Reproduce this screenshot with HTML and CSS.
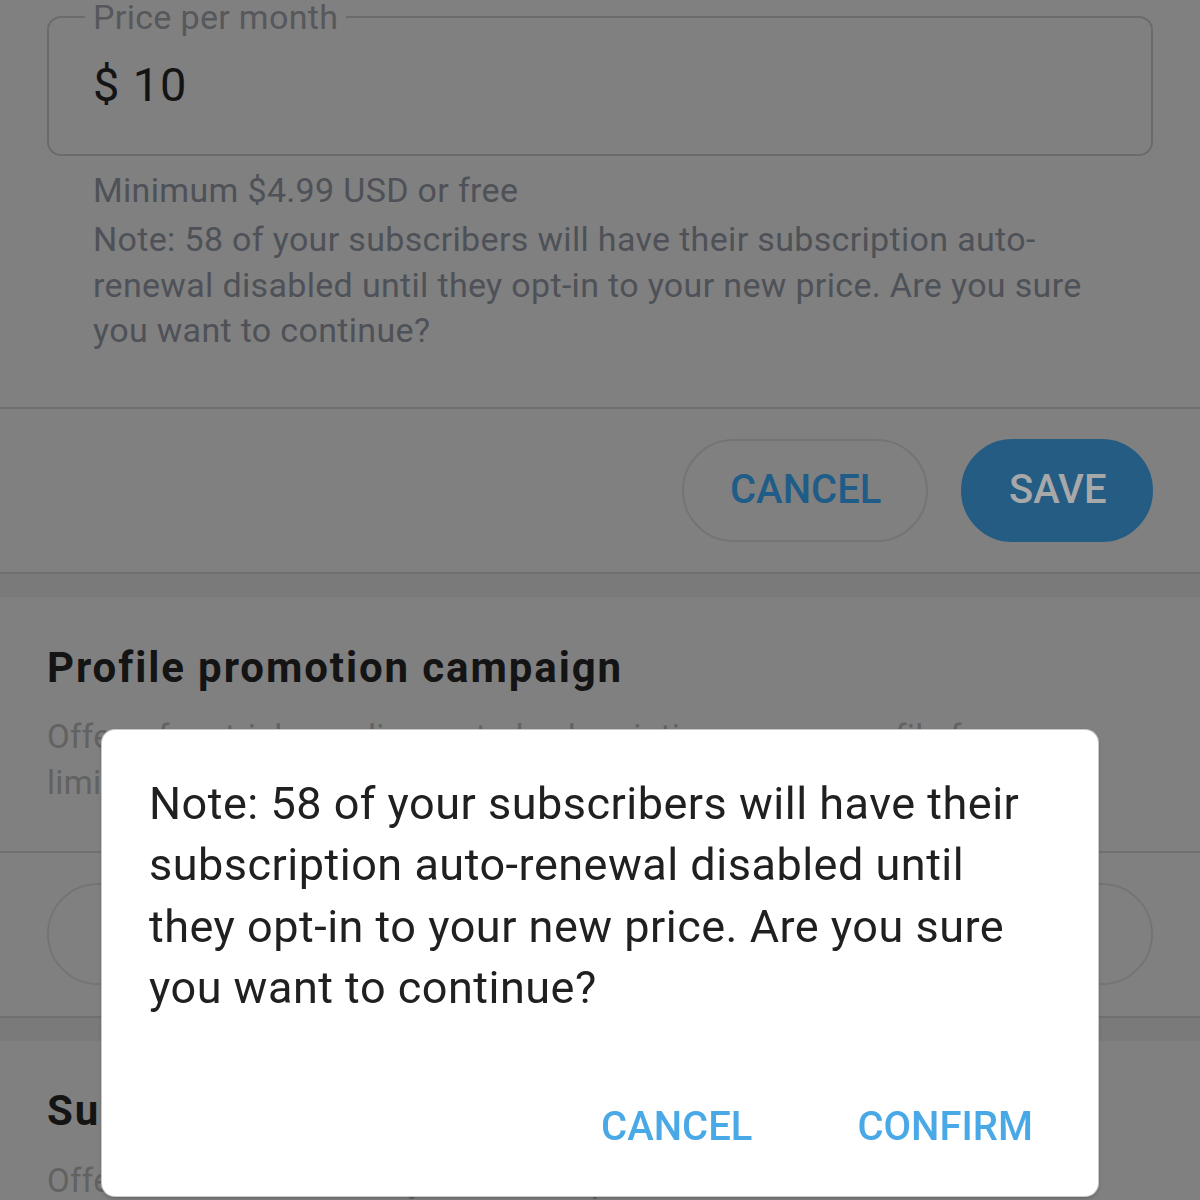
FILE: index.html
```html
<!DOCTYPE html>
<html lang="en">
<head>
<meta charset="utf-8">
<title>Subscription price</title>
<link rel="stylesheet" href="styles.css">
</head>
<body>
<main class="page">
  <section class="pricing">
    <fieldset class="field">
      <legend class="field-label">Price per month</legend>
      <div class="field-value">$ 10</div>
    </fieldset>
    <p class="helper">Minimum $4.99 USD or free</p>
    <p class="helper note">Note: 58 of your subscribers will have their subscription auto-renewal disabled until they opt-in to your new price. Are you sure you want to continue?</p>
  </section>
  <div class="actions">
    <button class="pill pill-outline" type="button">CANCEL</button>
    <button class="pill pill-filled" type="button">SAVE</button>
  </div>
  <div class="band"></div>
  <section class="block">
    <h2 class="block-title">Profile promotion campaign</h2>
    <p class="block-text">Offer a free trial or a discounted subscription on your profile for a limited number of new or already expired subscribers.</p>
  </section>
  <div class="wide-action">
    <button class="pill pill-outline pill-wide" type="button">START PROMOTION CAMPAIGN</button>
  </div>
  <div class="band"></div>
  <section class="block block-last">
    <h2 class="block-title">Subscription bundles</h2>
    <p class="block-text">Offer several months of your subscription as a discounted bundle.</p>
  </section>
</main>

<div class="scrim">
  <div class="dialog" role="dialog">
    <p class="dialog-text">Note: 58 of your subscribers will have their subscription auto-renewal disabled until they opt-in to your new price. Are you sure you want to continue?</p>
    <div class="dialog-actions">
      <button class="text-btn" type="button">CANCEL</button>
      <button class="text-btn" type="button">CONFIRM</button>
    </div>
  </div>
</div>
</body>
</html>
```
FILE: styles.css
```css
* { box-sizing: border-box; }

html, body {
  margin: 0;
  padding: 0;
}

body {
  width: 1200px;
  height: 1200px;
  overflow: hidden;
  background: #808080;
  font-family: Roboto, "Liberation Sans", sans-serif;
  color: #151515;
}

.page {
  width: 1200px;
}

/* ---------- price section ---------- */
.pricing {
  padding: 0 47px 53px;
  border-bottom: 2px solid #707070;
}

.field {
  margin: 0;
  padding: 23px 36px 41px;
  border: 2px solid #6b6b6b;
  border-radius: 14px;
  min-width: 0;
}

.field-label {
  padding: 0 8px;
  font-size: 34px;
  line-height: 34px;
  letter-spacing: 0.33px;
  color: #56585c;
}

.field-value {
  margin-left: 8px;
  font-size: 47px;
  line-height: 56px;
  letter-spacing: 0.8px;
  color: #141414;
}

.helper {
  margin: 11px 0 0;
  padding: 0 60px 0 46px;
  font-size: 34px;
  line-height: 46px;
  letter-spacing: 0.33px;
  color: #4e5157;
}

.helper.note {
  margin-top: 4px;
  line-height: 45.5px;
}

/* ---------- buttons ---------- */
.actions {
  display: flex;
  justify-content: flex-end;
  gap: 33px;
  padding: 30px 47px 30px;
  border-bottom: 2px solid #707070;
}

.pill {
  height: 103px;
  border-radius: 52px;
  font-family: Roboto, "Liberation Sans", sans-serif;
  font-size: 40px;
  font-weight: 500;
  line-height: 1;
  padding: 0 46px;
  cursor: pointer;
}

.pill-outline {
  width: 246px;
  background: transparent;
  border: 2px solid #747474;
  color: #1f5c87;
}

.pill-filled {
  width: 192px;
  background: #245c84;
  border: 2px solid #245c84;
  color: #a8a8a8;
}

.band {
  height: 23px;
  background: #7a7a7a;
}

/* ---------- info blocks ---------- */
.block {
  padding: 46px 47px 45px;
  border-bottom: 2px solid #707070;
}

.block-last {
  padding-top: 45px;
  border-bottom: 0;
}

.block-title {
  margin: 0;
  font-size: 42px;
  line-height: 50px;
  font-weight: 700;
  letter-spacing: 1.9px;
  color: #141414;
}

.block-text {
  margin: 21px 0 0;
  padding-right: 63px;
  font-size: 33px;
  line-height: 46px;
  letter-spacing: 0.33px;
  color: #626262;
}

.block-last .block-text {
  margin-top: 22px;
}

.wide-action {
  padding: 30px 47px 31px;
  border-bottom: 2px solid #707070;
}

.pill-wide {
  width: 100%;
  height: 102px;
}

/* ---------- dialog ---------- */
.scrim {
  position: fixed;
  inset: 0;
}

.dialog {
  position: absolute;
  left: 102px;
  top: 730px;
  width: 996px;
  height: 466px;
  background: #ffffff;
  border-radius: 13px;
  box-shadow: 0 0 0 1px #c9c9c9, 0 2px 4px rgba(0, 0, 0, 0.25);
  padding: 43px 58px 0 47px;
  display: flex;
  flex-direction: column;
}

.dialog-text {
  margin: 0;
  font-size: 45px;
  line-height: 61.3px;
  letter-spacing: 0.5px;
  color: #202020;
}

.dialog-actions {
  display: flex;
  justify-content: flex-end;
  gap: 105px;
  margin-top: 85px;
  margin-right: 7px;
}

.text-btn {
  border: 0;
  background: transparent;
  padding: 0;
  font-family: Roboto, "Liberation Sans", sans-serif;
  font-size: 40px;
  line-height: 48px;
  font-weight: 500;
  color: #49a8e6;
  cursor: pointer;
}
```
